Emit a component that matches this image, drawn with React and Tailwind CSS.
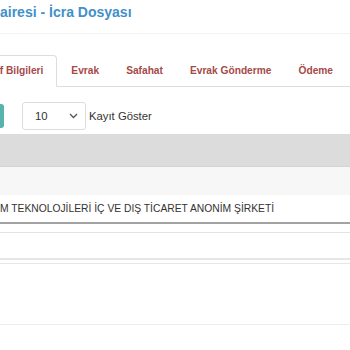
export default function App() {
  const tabs = ["Evrak", "Safahat", "Evrak Gönderme", "Ödeme"];
  return (
    <div className="w-[350px] h-[350px] overflow-hidden bg-white font-['Liberation_Sans',Arial,sans-serif] text-[#333]">
      <div className="h-[34px] border-b border-[#f3f3f3] pt-[4px]">
        <h1 className="text-[14px] font-bold text-[#4190c9] leading-[17px] whitespace-nowrap">airesi - İcra Dosyası</h1>
      </div>
      <div className="mt-[21px] h-[32px] flex border-b border-[#ddd] whitespace-nowrap">
        <div className="-ml-[35px] h-[32px] px-[13px] border border-[#ddd] border-b-white rounded-t bg-white flex items-center text-[10.2px] font-bold text-[#a54a4a]">
          Taraf Bilgileri
        </div>
        {tabs.map((t) => (
          <div key={t} className="ml-[1px] h-[31px] px-[13px] flex items-center text-[10.2px] font-bold text-[#a54a4a]">
            {t}
          </div>
        ))}
      </div>
      <div className="mt-[15px] h-[28px] flex items-center">
        <div className="w-[4px] h-[24px] bg-[#56b3ad] rounded-r-[3px]"></div>
        <div className="ml-[18px] w-[64px] h-[28px] border border-[#ddd] rounded-[3px] flex items-center justify-between pl-[12px] pr-[7px] text-[11.3px] text-[#333]">
          <span>10</span>
          <svg width="9" height="6" viewBox="0 0 9 6" fill="none" stroke="#555" strokeWidth="1.3"><path d="M1 1l3.5 3.5L8 1" /></svg>
        </div>
        <span className="ml-[3px] text-[11.3px] text-[#333]">Kayıt Göster</span>
      </div>
      <div className="mt-[4px] h-[33px] bg-[#dcdcdc] border-b border-[#d5d5d5]"></div>
      <div className="h-[28px] bg-[#f7f7f7]"></div>
      <div className="h-[29px] border-b-2 border-[#a3a3a3] flex items-center text-[10.3px] text-[#333] whitespace-nowrap">
        M TEKNOLOJİLERİ İÇ VE DIŞ TİCARET ANONİM ŞİRKETİ
      </div>
      <div className="h-[9px] border-b border-[#e3e3e3]"></div>
      <div className="h-[27px] border-b-2 border-[#e6e6e6]"></div>
      <div className="h-[4px] border-b border-[#e6e6e6]"></div>
      <div className="h-[61px] border-b border-[#eeeeee]"></div>
    </div>
  );
}
